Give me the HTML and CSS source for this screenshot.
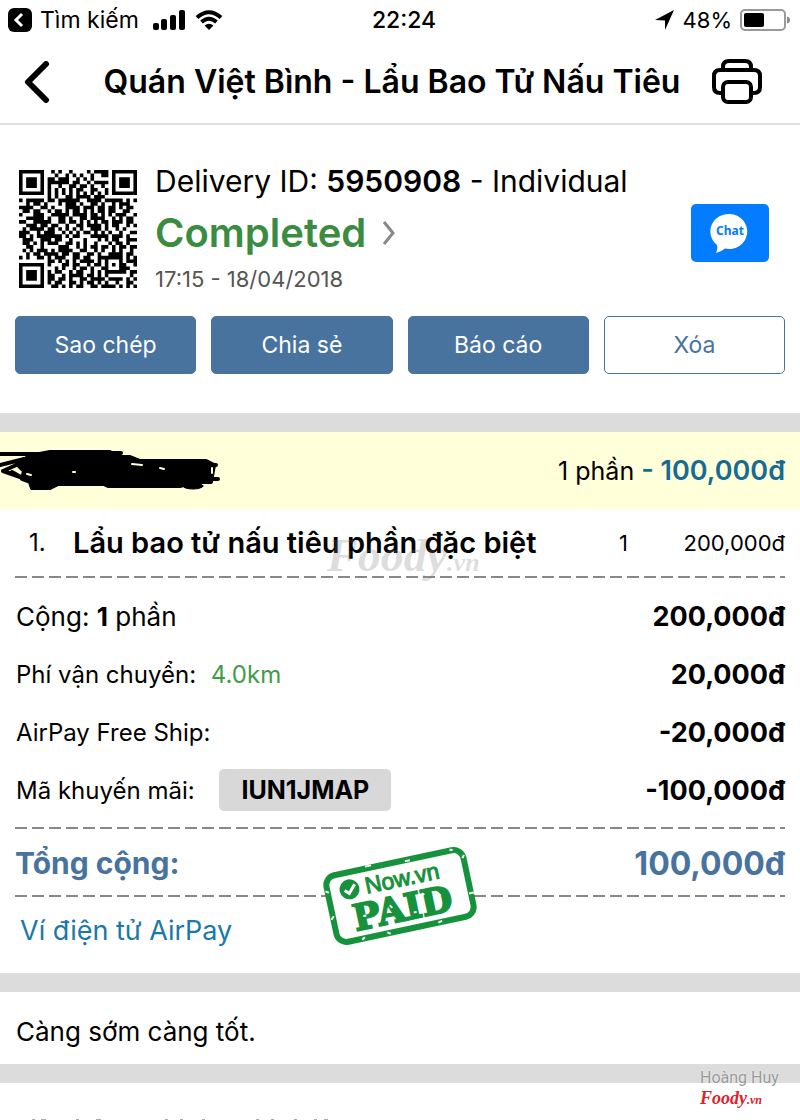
FILE: index.html
```
<!DOCTYPE html>
<html lang="vi">
<head>
  <meta charset="utf-8">
  <meta name="viewport" content="width=device-width, initial-scale=1">
  <title>Quán Việt Bình - Lẩu Bao Tử Nấu Tiêu</title>
  <link rel="stylesheet" href="styles.css">
</head>
<body>
  <div class="status-bar">
    <div class="status-left">
      <svg width="24" height="24" viewBox="0 0 24 24"><rect width="24" height="24" rx="6"/><path d="M14 6 8 12l6 6" fill="none" stroke="#fff" stroke-width="3"/></svg>
      <span>Tìm kiếm</span>
      <svg class="signal" width="32" height="20" viewBox="0 0 32 20"><rect y="13" width="6" height="7" rx="2"/><rect x="8" y="9" width="6" height="11" rx="2"/><rect x="17" y="5" width="6" height="15" rx="2"/><rect x="26" y="0" width="6" height="20" rx="2"/></svg>
      <svg width="28" height="20" viewBox="0 0 28 20"><g fill="none" stroke="#000" stroke-width="4"><path d="M2 7.500Q14-3 26 7.500"/><path d="M6.500 12Q14 5.500 21.500 12"/></g><path d="M9.500 15.500Q14 12 18.500 15.500L14 20z"/></svg>
    </div>
    <div class="clock">22:24</div>
    <div class="status-right">
      <svg width="20" height="20" viewBox="0 0 20 20"><path d="M19 0 10 20V10.500L0 10z"/></svg>
      <span class="percent">48%</span>
      <svg width="50" height="22" viewBox="0 0 50 22"><rect x="1" y="1" width="44" height="20" rx="4" fill="#fff" stroke="#999" stroke-width="2"/><rect x="4" y="4" width="20" height="14" rx="2"/><path d="M47 7.500q3 1 3 3.500t-3 3.500z" fill="#888"/></svg>
    </div>
  </div>

  <header class="header">
    <button class="icon-button" aria-label="Quay lại">
      <svg width="26" height="42" viewBox="0 0 26 42"><path d="M22 3 4 21l18 18" fill="none" stroke="#000" stroke-width="6" stroke-linecap="round" stroke-linejoin="round"/></svg>
    </button>
    <h1>Quán Việt Bình - Lẩu Bao Tử Nấu Tiêu</h1>
    <button class="icon-button" aria-label="In">
      <svg width="50" height="46" viewBox="0 0 50 46" fill="none" stroke="#000" stroke-width="4"><path d="M11 11V8q0-6 6-6h16q6 0 6 6v3"/><path d="M10 34H8q-6 0-6-6V17q0-6 6-6h34q6 0 6 6v11q0 6-6 6h-2"/><rect x="11" y="23" width="28" height="20" rx="5"/></svg>
    </button>
  </header>

  <section class="delivery">
    <div class="delivery-top">
      <svg id="qr" class="qr" viewBox="0 0 33 33" role="img" aria-label="QR"></svg>
      <div class="delivery-info">
        <div class="delivery-id">Delivery ID: <strong>5950908</strong> - Individual</div>
        <a class="delivery-status" href="#">Completed
          <svg width="14" height="26" viewBox="0 0 14 26"><path d="m2 2 9 11-9 11" fill="none" stroke="#888" stroke-width="3"/></svg>
        </a>
        <div class="delivery-time">17:15 - 18/04/2018</div>
      </div>
      <button class="chat-button">
        <svg width="40" height="40" viewBox="0 0 40 40"><path d="M20 1a18 17.500 0 1 1-5 34.500Q11 39 6 40q2-4 1-8A18 17.500 0 0 1 20 1z" fill="#fff"/><text x="20" y="22" text-anchor="middle">Chat</text></svg>
      </button>
    </div>
    <div class="actions">
      <button class="action">Sao chép</button>
      <button class="action">Chia sẻ</button>
      <button class="action">Báo cáo</button>
      <button class="action outline">Xóa</button>
    </div>
  </section>

  <section class="customer">
    <svg width="220" height="42" viewBox="0 0 220 42" stroke="#000" stroke-linecap="round" stroke-linejoin="round"><path d="M29 6 50 2h60l4 5h16l10 4h66l8 4-3 17H192l-12 4h-72l-4-2H58l-8 4H32l-2-6-8-3 2-8-6-6z" stroke-width="4"/><g fill="none" stroke-width="4"><path d="M0 4h40M60 3h61M0 15l24-6M3 21l20-9M3 21l20 7M12 22l14 8M200 15h16M205 29h13"/></g><ellipse cx="193" cy="36" rx="10" ry="3"/><g fill="none" stroke="#ffffd9" stroke-width="2"><path d="M27 24l4 1M132 14l10 1M160 18l4 1M73 22h2M212 18v5"/></g></svg>
    <div class="customer-sum">1 phần <strong>- 100,000đ</strong></div>
  </section>

  <main class="order">
    <div class="item">
      <span class="item-index">1.</span>
      <h2>Lẩu bao tử nấu tiêu phần đặc biệt</h2>
      <span class="item-count">1</span>
      <span class="item-price">200,000đ</span>
      <span class="watermark">Foody<small>.vn</small></span>
    </div>
    <div class="charges">
      <div class="charge"><span class="large">Cộng: <b>1</b> phần</span><strong>200,000đ</strong></div>
      <div class="charge"><span>Phí vận chuyển: <span class="distance">4.0km</span></span><strong>20,000đ</strong></div>
      <div class="charge"><span>AirPay Free Ship:</span><strong>-20,000đ</strong></div>
      <div class="charge"><span>Mã khuyến mãi: <span class="coupon">IUN1JMAP</span></span><strong>-100,000đ</strong></div>
    </div>
    <div class="total">
      <span>Tổng cộng:</span>
      <span class="total-sum">100,000đ</span>
      <svg class="stamp" width="160" height="106" viewBox="-80 -53 160 106">
        <g transform="rotate(-12)" fill="#17923c">
          <rect x="-70" y="-34" width="140" height="68" rx="10" fill="#fff" stroke="#17923c" stroke-width="6"/>
          <circle cx="-48" cy="-17" r="10"/>
          <path d="m-53-17 4 4 7-8" fill="none" stroke="#fff" stroke-width="3"/>
          <text class="stamp-name" x="-32" y="-9">Now.vn</text>
          <text class="stamp-paid" x="0" y="25" text-anchor="middle">PAID</text>
          <path d="M-72-20l3 2M-69 6l-3 3M-28-36h6M12-33h5M69-24l2-3M68 12h5M-20 33l3 2M32 34l4-1M-46 35l3-2M-40 12h3M-12 7l2 3M10 19h3M38 6l2 2M-50 2h3M22 2l2 2M58-35l3 1" fill="none" stroke="#fff" stroke-width="2"/>
        </g>
      </svg>
    </div>
    <a class="payment" href="#">Ví điện tử AirPay</a>
  </main>

  <section class="note">Càng sớm càng tốt.</section>

  <footer class="footer">
    <svg class="peek" width="340" height="2" viewBox="0 0 340 2" aria-hidden="true"><path d="M32 1h3M41 1h5M76 1h3M96 1h5M165 1h3M180 1h3M202 1h3M256 1h3M271 1h3M294 1h3M314 1h3M324 1h4" stroke="#aaa" stroke-width="2"/></svg>
    <div class="credit">
      <div class="credit-name">Hoàng Huy</div>
      <div class="credit-brand">Foody<small>.vn</small></div>
    </div>
  </footer>

  <script>
    // QR modules, one string per row
    const QR_ROWS = [
      '#######..#.#..#....#.####.#######',
      '#.....#...#..#.#.#..#..##.#.....#',
      '#.###.#.##.###..#.#.#.....#.###.#',
      '#.###.#.######.##..#.####.#.###.#',
      '#.###.#.#..#..##.##.#..#..#.###.#',
      '#.....#.#.#.#.#.##..##..#.#.....#',
      '#######.#.#.#.#.#.#.#.#.#.#######',
      '........#.#..##.####.###.........',
      '#.#####.##.######..####.#####.#.#',
      '..#.##.#...#.###.#..##.#..#.###..',
      '####..##.#...####.###.##.##.#.##.',
      '.##.##..#.##.#.##.#.#.##.##..##..',
      '#...###..#####.####.##.#.#.###..#',
      '..#####.#..##.#..##.####..#.#.##.',
      '##..#####..##.##.#.#.#.##.###.##.',
      '..###.##.##..#..##.####.#.##..#.#',
      '.#.####.##.#.#.#.#..###.#..#.#...',
      '###..#.###..#.#.#.##.#.#.#..#..##',
      '##.#.#######.#.##...#####.###.#..',
      '.###..###.##..#...#...#.#.##..###',
      '.##.#.#.###..##.#.#..#...#.##.#..',
      '..##..#....###..#.#.##.##.#.##.##',
      '.#.#.###.#.####..##..#.#..#.#..#.',
      '..#.##.####.##.##..##.#..####.##.',
      '#.#..##.#.###..##.##..#######.#.#',
      '........##.#.#.#.####.#.#...#.###',
      '#######.#...##.##..#.##.#.#.##..#',
      '#.....#...#.#..#.##.#..##...###..',
      '#.###.#.#.##..#.##..#.#.######.##',
      '#.###.#.##..#.####.##.#.#......#.',
      '#.###.#.##.##.#..##.####.####.#.#',
      '#.....#.#.##..##.#.##.#.#..#..##.',
      '#######..##.#.#.##..##.####.#.#.#'
    ];

    let d = '';
    QR_ROWS.forEach((row, y) => {
      [...row].forEach((cell, x) => {
        if (cell === '#') d += `M${x} ${y}h1v1h-1z`;
      });
    });
    document.getElementById('qr').innerHTML = `<path d="${d}"/>`;
  </script>
</body>
</html>
```
FILE: styles.css
```
:root {
  --blue: #48739e;
  --link: #1b78a8;
  --green: #3b8c40;
  --band: #dcdcdc;
}

* {
  box-sizing: border-box;
}

html {
  height: 100%;
}

body {
  margin: 0;
  min-height: 100%;
  display: flex;
  flex-direction: column;
  overflow-x: hidden;
  background: #fff;
  color: #000;
  font-family: Inter, "Noto Sans", sans-serif;
  font-size: 24px;
}

button {
  font: inherit;
  padding: 0;
  border: 0;
  background: none;
  cursor: pointer;
}

a {
  text-decoration: none;
}

svg {
  display: block;
  flex: none;
}

h1,
h2 {
  margin: 0;
  font-weight: 600;
}

.status-bar {
  height: 40px;
  padding: 0 10px 0 8px;
  display: grid;
  grid-template-columns: 1fr auto 1fr;
  align-items: center;
  font-size: 23px;
}

.status-left,
.status-right {
  display: flex;
  align-items: center;
  gap: 8px;
}

.status-right {
  justify-content: flex-end;
}

.signal {
  margin: 0 2px 0 6px;
}

.clock {
  padding-left: 10px;
  font-weight: 500;
}

.percent {
  font-size: 22px;
}

.header {
  height: 85px;
  padding: 0 38px 0 24px;
  display: flex;
  align-items: center;
  justify-content: space-between;
  border-bottom: 2px solid #e0e0e0;
}

.header h1 {
  padding-left: 22px;
  font-size: 32px;
  white-space: nowrap;
}

.delivery {
  padding: 36px 15px 39px;
}

.delivery-top {
  display: flex;
  align-items: center;
  padding: 0 16px 0 4px;
}

.qr {
  width: 118px;
  height: 118px;
  margin-top: 4px;
}

.delivery-info {
  flex: 1;
  margin-left: 18px;
}

.delivery-id {
  font-size: 30px;
  line-height: 40px;
}

.delivery-id strong {
  font-weight: 600;
}

.delivery-status {
  display: flex;
  align-items: center;
  gap: 16px;
  font-size: 40px;
  line-height: 64px;
  font-weight: 600;
  color: var(--green);
}

.delivery-time {
  font-size: 22px;
  line-height: 28px;
  color: #555;
}

.chat-button {
  width: 78px;
  height: 58px;
  margin-top: 12px;
  display: grid;
  place-items: center;
  border-radius: 5px;
  background: #047cff;
}

.chat-button text {
  font: bold 12px "Noto Sans", sans-serif;
  fill: #047cff;
}

.actions {
  margin-top: 23px;
  display: grid;
  grid-template-columns: repeat(4, 1fr);
  gap: 15px;
}

.action {
  height: 58px;
  border: 1px solid var(--blue);
  border-radius: 5px;
  background: var(--blue);
  color: #fff;
  font-size: 23px;
}

.outline {
  background: #fff;
  color: var(--blue);
}

.customer {
  height: 96px;
  padding-right: 15px;
  display: flex;
  align-items: center;
  justify-content: space-between;
  border-top: 19px solid var(--band);
  background: #ffffd9;
}

.customer-sum {
  font-size: 25px;
}

.customer-sum strong {
  font-size: 27px;
  font-weight: 600;
  color: #176b92;
}

.order {
  padding: 0 15px;
}

.item,
.charges,
.total {
  background: repeating-linear-gradient(90deg, #888 0 12px, transparent 12px 17px) bottom / 100% 2px no-repeat;
}

.item {
  position: relative;
  height: 69px;
  display: grid;
  grid-template-columns: 44px 1fr 40px 126px;
  align-items: center;
  padding: 0 0 2px 14px;
}

.item h2 {
  font-size: 29px;
  white-space: nowrap;
}

.item-count,
.item-price {
  font-size: 22px;
}

.item-price {
  text-align: right;
}

.watermark {
  position: absolute;
  left: 312px;
  top: 20px;
  color: rgba(120, 120, 120, 0.25);
  font: italic bold 46px "Liberation Serif", serif;
}

.watermark small {
  font-size: 26px;
}

.charges {
  padding: 9px 0 0 1px;
  height: 251px;
}

.charge {
  height: 58px;
  display: flex;
  align-items: center;
  justify-content: space-between;
}

.charge strong {
  font-size: 27px;
}

.large {
  font-size: 26px;
}

.distance {
  margin-left: 8px;
  color: #3f9c4b;
}

.coupon {
  display: inline-block;
  margin-left: 18px;
  padding: 0 22px;
  border-radius: 5px;
  background: #d8d8d8;
  font-size: 25px;
  font-weight: 700;
  line-height: 42px;
}

.total {
  position: relative;
  height: 68px;
  display: flex;
  align-items: center;
  justify-content: space-between;
  font-size: 30px;
  font-weight: 700;
  color: var(--blue);
}

.total-sum {
  font-size: 32px;
}

.stamp {
  position: absolute;
  left: 305px;
  top: 14px;
}

.stamp-name {
  font: 23px "Liberation Sans", sans-serif;
  stroke: #17923c;
  stroke-width: 1px;
}

.stamp-paid {
  font: bold 36px "DejaVu Serif", serif;
  stroke: #17923c;
  stroke-width: 2px;
}

.payment {
  display: block;
  padding-left: 5px;
  font-size: 27px;
  line-height: 68px;
  height: 76px;
  color: var(--link);
}

.note {
  height: 110px;
  padding: 6px 16px 0;
  display: flex;
  align-items: center;
  border: solid var(--band);
  border-width: 19px 0;
  font-size: 26px;
}

.footer {
  position: relative;
  flex: 1;
  min-height: 38px;
  display: flex;
  align-items: flex-end;
}

.credit {
  position: absolute;
  right: 18px;
  top: -16px;
  width: 82px;
}

.credit-name {
  font: 16px/22px Roboto, sans-serif;
  color: #999;
  text-shadow: 0 0 2px #fff;
  white-space: nowrap;
}

.credit-brand {
  font: italic bold 18px/18px "Liberation Serif", serif;
  color: #e0202c;
}

.credit-brand small {
  font-size: 12px;
}
```
